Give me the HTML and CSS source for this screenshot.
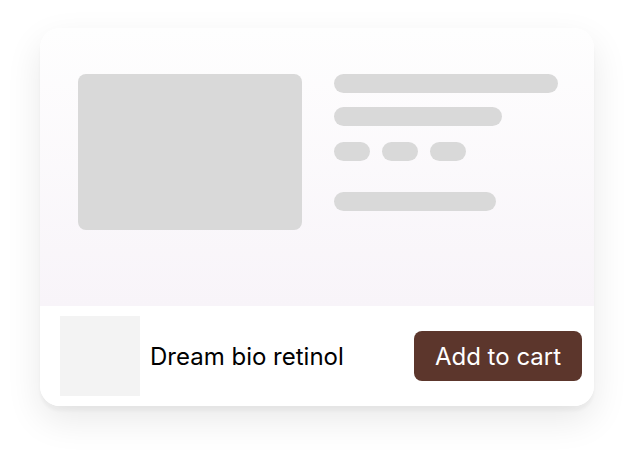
FILE: index.html
```html
<!DOCTYPE html>
<html>
<head>
<meta charset="utf-8">
<link rel="stylesheet" href="styles.css">
</head>
<body>
<div class="card">
  <div class="preview">
    <div class="media"></div>
    <div class="lines">
      <div class="line l1"></div>
      <div class="line l2"></div>
      <div class="pills">
        <div class="pill"></div>
        <div class="pill"></div>
        <div class="pill"></div>
      </div>
      <div class="line l4"></div>
    </div>
  </div>
  <div class="bar">
    <div class="thumb"></div>
    <div class="name">Dream bio retinol</div>
    <button class="cart">Add to cart</button>
  </div>
</div>
</body>
</html>
```

FILE: styles.css
```css
html, body {
  margin: 0;
  padding: 0;
  background: #ffffff;
  font-family: "Inter", "Liberation Sans", sans-serif;
}
body {
  box-sizing: border-box;
  min-height: 464px;
  padding: 28px 0 0 40px;
}
.card {
  width: 554px;
  border-radius: 20px;
  background: #ffffff;
  overflow: hidden;
  box-shadow: 0 5px 3px rgba(0,0,0,0.035), 0 14px 36px rgba(0,0,0,0.09);
}
.preview {
  height: 278px;
  box-sizing: border-box;
  padding: 46px 36px 0 38px;
  display: flex;
  gap: 32px;
  background: linear-gradient(180deg, #fefefe 0%, #f8f4f9 100%);
}
.media {
  width: 224px;
  height: 156px;
  border-radius: 8px;
  background: #d9d9d9;
}
.lines {
  width: 224px;
  display: flex;
  flex-direction: column;
}
.line {
  height: 19px;
  border-radius: 10px;
  background: #d9d9d9;
}
.l1 { width: 224px; }
.l2 { width: 168px; margin-top: 14px; }
.pills {
  display: flex;
  gap: 12px;
  margin-top: 16px;
}
.pill {
  width: 36px;
  height: 19px;
  border-radius: 10px;
  background: #d9d9d9;
}
.l4 { width: 162px; margin-top: 31px; }
.bar {
  display: flex;
  align-items: center;
  padding: 10px 12px 10px 20px;
  background: #ffffff;
}
.thumb {
  width: 80px;
  height: 80px;
  background: #f3f3f3;
}
.name {
  margin-left: 10px;
  font-size: 24px;
  color: #000000;
}
.cart {
  margin-left: auto;
  width: 168px;
  height: 50px;
  border: none;
  border-radius: 8px;
  background: #5c362c;
  color: #ffffff;
  font-family: "Inter", "Liberation Sans", sans-serif;
  font-size: 24px;
  padding: 0;
}
```
